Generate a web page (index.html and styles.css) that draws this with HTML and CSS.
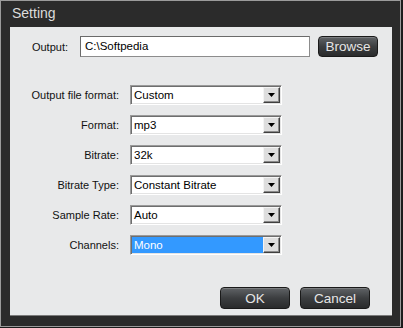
FILE: index.html
```html
<!DOCTYPE html>
<html lang="en">
<head>
  <meta charset="UTF-8">
  <meta name="viewport" content="width=device-width, initial-scale=1.0">
  <title>Setting</title>
  <link rel="stylesheet" href="styles.css">
</head>
<body>
  <div class="window">
    <div class="title">Setting</div>
    <div class="panel">
      <div class="output-row">
        <label class="output-label">Output:</label>
        <div class="text-field">C:\Softpedia</div>
        <button class="dark-btn browse">Browse</button>
      </div>

      <div class="form-grid">
        <label>Output file format:</label>
        <div class="combo"><span class="combo-value">Custom</span><span class="combo-arrow"><svg width="7" height="4" viewBox="0 0 7 4"><path d="M0 0h7L3.5 4z" fill="#000"/></svg></span></div>

        <label>Format:</label>
        <div class="combo"><span class="combo-value">mp3</span><span class="combo-arrow"><svg width="7" height="4" viewBox="0 0 7 4"><path d="M0 0h7L3.5 4z" fill="#000"/></svg></span></div>

        <label>Bitrate:</label>
        <div class="combo"><span class="combo-value">32k</span><span class="combo-arrow"><svg width="7" height="4" viewBox="0 0 7 4"><path d="M0 0h7L3.5 4z" fill="#000"/></svg></span></div>

        <label>Bitrate Type:</label>
        <div class="combo"><span class="combo-value">Constant Bitrate</span><span class="combo-arrow"><svg width="7" height="4" viewBox="0 0 7 4"><path d="M0 0h7L3.5 4z" fill="#000"/></svg></span></div>

        <label>Sample Rate:</label>
        <div class="combo"><span class="combo-value">Auto</span><span class="combo-arrow"><svg width="7" height="4" viewBox="0 0 7 4"><path d="M0 0h7L3.5 4z" fill="#000"/></svg></span></div>

        <label>Channels:</label>
        <div class="combo"><span class="combo-value selected">Mono</span><span class="combo-arrow"><svg width="7" height="4" viewBox="0 0 7 4"><path d="M0 0h7L3.5 4z" fill="#000"/></svg></span></div>
      </div>

      <div class="actions">
        <button class="dark-btn">OK</button>
        <button class="dark-btn">Cancel</button>
      </div>
    </div>
  </div>
</body>
</html>
```

FILE: styles.css
```css
body {
  margin: 0;
  width: 403px;
  height: 328px;
  background-color: #1c1c1c;
  font-family: "Liberation Sans", Arial, sans-serif;
  overflow: hidden;
}
.window {
  width: 399px;
  height: 325px;
  background-color: #2b2b2b;
  border: 1px solid #9b9b9b;
}
.title {
  height: 26px;
  line-height: 25px;
  padding-left: 11px;
  font-size: 14px;
  color: #dcdcdc;
}
.panel {
  box-sizing: border-box;
  margin-left: 9px;
  width: 382px;
  height: 289px;
  background-color: #e8e9ea;
  border-bottom: 1px solid #7a7a7a;
  padding-top: 9px;
}
.output-row {
  display: flex;
  align-items: center;
  height: 21px;
}
.output-label {
  width: 58px;
  text-align: right;
  font-size: 11px;
  color: #111;
}
.text-field {
  box-sizing: border-box;
  margin-left: 12px;
  width: 230px;
  height: 21px;
  line-height: 19px;
  padding-left: 4px;
  background: #fff;
  border: 1px solid #8c8c8c;
  border-top-color: #6a6a6a;
  border-left-color: #6a6a6a;
  font-size: 11.5px;
  color: #000;
}
.dark-btn {
  box-sizing: border-box;
  width: 70px;
  height: 22px;
  padding: 0;
  border: 1px solid #1a1a1a;
  border-radius: 4px;
  background: linear-gradient(#606366, #3c3e40 50%, #2a2b2c);
  box-shadow: inset 0 1px 0 rgba(255, 255, 255, 0.18);
  color: #e6e6e6;
  font-family: "Liberation Sans", Arial, sans-serif;
  font-size: 13.5px;
  cursor: pointer;
}
.browse {
  margin-left: 8px;
  width: 60px;
  height: 21px;
}
.form-grid {
  display: grid;
  grid-template-columns: 109px 152px;
  grid-auto-rows: 20px;
  column-gap: 11px;
  row-gap: 10px;
  margin-top: 28px;
  align-items: center;
}
.form-grid label {
  text-align: right;
  font-size: 11px;
  color: #111;
}
.combo {
  box-sizing: border-box;
  display: flex;
  height: 20px;
  background: #fff;
  border: 1px solid;
  border-color: #9a9a9a #fff #fff #9a9a9a;
  box-shadow: inset 1px 1px 0 #6e6e6e, inset -1px -1px 0 #e4e4e4;
  padding: 1px;
}
.combo-value {
  flex: 1;
  line-height: 16px;
  padding-left: 2px;
  font-size: 11.5px;
  color: #000;
  white-space: nowrap;
  overflow: hidden;
}
.combo-value.selected {
  background-color: #3399ff;
  color: #fff;
}
.combo-arrow {
  box-sizing: border-box;
  width: 17px;
  height: 16px;
  display: flex;
  align-items: center;
  justify-content: center;
  background: #dedede;
  border: 1px solid;
  border-color: #f4f4f4 #404040 #404040 #f4f4f4;
  box-shadow: inset -1px -1px 0 #8a8a8a;
}
.actions {
  display: flex;
  justify-content: flex-end;
  gap: 10px;
  padding-right: 22px;
  margin-top: 32px;
}
```
